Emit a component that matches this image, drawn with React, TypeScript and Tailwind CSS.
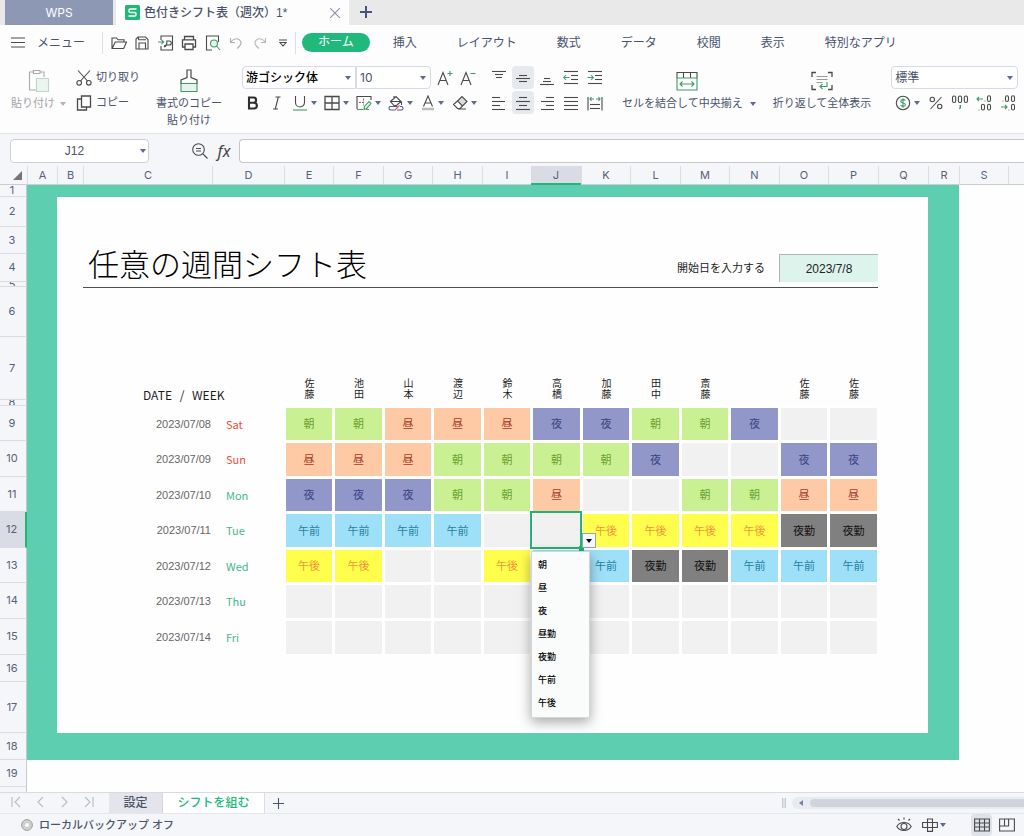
import React from "react";

type Shift = "朝" | "昼" | "夜" | "夜勤" | "午前" | "午後" | "";

const SHIFT_STYLES: Record<Shift, string> = {
  朝: "bg-[#c9f193] text-[#6c9f2f]",
  昼: "bg-[#fecaa5] text-[#a63c2c]",
  夜: "bg-[#9198c9] text-[#3a427f]",
  夜勤: "bg-[#808080] text-[#111111]",
  午前: "bg-[#9fe0f9] text-[#25809f]",
  午後: "bg-[#fffe4d] text-[#f2953a]",
  "": "bg-[#f1f1f1]",
};

const COLUMNS: { name: string; width: number | null }[] = [
  { name: "A", width: 30 },
  { name: "B", width: 26 },
  { name: "C", width: 129 },
  { name: "D", width: 72 },
  { name: "E", width: 49 },
  { name: "F", width: 50 },
  { name: "G", width: 49 },
  { name: "H", width: 50 },
  { name: "I", width: 49 },
  { name: "J", width: 50 },
  { name: "K", width: 49 },
  { name: "L", width: 50 },
  { name: "M", width: 49 },
  { name: "N", width: 50 },
  { name: "O", width: 49 },
  { name: "P", width: 50 },
  { name: "Q", width: 50 },
  { name: "R", width: 31 },
  { name: "S", width: 49 },
  { name: "", width: null },
];

const STAFF = ["佐藤", "池田", "山本", "渡辺", "鈴木", "高橋", "加藤", "田中", "斎藤", "", "佐藤", "佐藤"];

const DAYS: { row: number; height: number; date: string; day: string; weekend?: boolean; shifts: Shift[] }[] = [
  { row: 9, height: 35, date: "2023/07/08", day: "Sat", weekend: true, shifts: ["朝", "朝", "昼", "昼", "昼", "夜", "夜", "朝", "朝", "夜", "", ""] },
  { row: 10, height: 36, date: "2023/07/09", day: "Sun", weekend: true, shifts: ["昼", "昼", "昼", "朝", "朝", "朝", "朝", "夜", "", "", "夜", "夜"] },
  { row: 11, height: 35, date: "2023/07/10", day: "Mon", shifts: ["夜", "夜", "夜", "朝", "朝", "昼", "", "", "朝", "朝", "昼", "昼"] },
  { row: 12, height: 36, date: "2023/07/11", day: "Tue", shifts: ["午前", "午前", "午前", "午前", "", "", "午後", "午後", "午後", "午後", "夜勤", "夜勤"] },
  { row: 13, height: 35, date: "2023/07/12", day: "Wed", shifts: ["午後", "午後", "", "", "午後", "午前", "午前", "夜勤", "夜勤", "午前", "午前", "午前"] },
  { row: 14, height: 36, date: "2023/07/13", day: "Thu", shifts: ["", "", "", "", "", "", "", "", "", "", "", ""] },
  { row: 15, height: 36, date: "2023/07/14", day: "Fri", shifts: ["", "", "", "", "", "", "", "", "", "", "", ""] },
];

const OPTIONS = ["朝", "昼", "夜", "昼勤", "夜勤", "午前", "午後"];
const MENU_TABS = ["挿入", "レイアウト", "数式", "データ", "校閲", "表示", "特別なアプリ"];

type Box = { w: number; h: number; children: React.ReactNode; className?: string };

function Icon({ w, h, children, className = "" }: Box) {
  return (
    <svg width={w} height={h} viewBox={`0 0 ${w} ${h}`} fill="none" stroke="#4a4a4a" strokeWidth="1.1" className={`shrink-0 ${className}`} aria-hidden="true">
      {children}
    </svg>
  );
}

function Caret({ className = "" }: { className?: string }) {
  return (
    <svg width="6" height="4" viewBox="0 0 6 4" className={`shrink-0 ${className || "fill-[#5d6b8c]"}`} aria-hidden="true">
      <path d="M0 0h6L3 4z" />
    </svg>
  );
}

const GREEN = "#3f9b69";

function QuickAccess() {
  const items: [string, React.ReactNode][] = [
    ["開く", <Icon w={16} h={16}><path d="M1 13.5V3h4.5l1.5 1.8h6V7M1.2 13.5 4.2 7h11.3l-2.8 6.5z" /></Icon>],
    ["保存", <Icon w={14} h={14}><path d="M1 13V3L3 1h7.500L13 3.500V13zM3.500 3.800H11M4 13V7h6.500v6M3.500 1v2.800" /></Icon>],
    ["PDF出力", <Icon w={16} h={16}><path d="M3 5V1h11.5v14H3v-4M6.5 11.8c2-.5 2.4-2.8 2.4-5.8h2.4a1.7 1.7 0 0 1 0 4H8.2c-1 0-2 .6-1.7 1.8z" /><path d="M0 7h5.5M3.5 4.8 5.7 7l-2.2 2.2" stroke={GREEN} /></Icon>],
    ["印刷", <Icon w={16} h={16}><path d="M3.500 4.500v-3h9v3M4 12H1.500V4.800h13V12H12M4 9h8v5.500H4z" strokeWidth="1.3" /></Icon>],
    ["プレビュー", <Icon w={16} h={16}><path d="M7 15H1.500V1h12v6M1.500 15H5" /><circle cx="9" cy="8.500" r="3.500" fill="#e4f3ea" stroke={GREEN} /><path d="m11.500 11 3.500 4" stroke={GREEN} /></Icon>],
    ["元に戻す", <Icon w={14} h={14}><path d="M1.500 2v4.500H6M1.700 6.300C4 2.800 8 1.800 10.600 4c2.600 2.300 1.500 5.500-2.600 8.500" stroke="#b0b0b0" /></Icon>],
    ["やり直し", <Icon w={14} h={14}><path d="M12.500 2v4.500H8M12.300 6.300C10 2.800 6 1.800 3.400 4 .8 6.300 1.900 9.500 6 12.500" stroke="#b8b8b8" /></Icon>],
    ["カスタマイズ", <Icon w={8} h={8}><path d="M0 1h8M1 3.500h6L4 7z" /></Icon>],
  ];
  return (
    <div className="grid w-[188px] grid-cols-8 items-center">
      {items.map(([label, icon]) => (
        <button key={label} type="button" aria-label={label} className="flex h-6 items-center justify-center">
          {icon}
        </button>
      ))}
    </div>
  );
}

function ToolButton({ label, children, active = false, wide = false }: { label: string; children: React.ReactNode; active?: boolean; wide?: boolean }) {
  return (
    <button
      type="button"
      aria-label={label}
      className={`flex h-[23px] items-center justify-center gap-[3px] rounded ${wide ? "w-8" : "w-[22px]"} ${active ? "bg-[#e6e9ee]" : ""}`}
    >
      {children}
      {wide && <Caret />}
    </button>
  );
}

function SelectBox({ label, value, className }: { label: string; value: string; className: string }) {
  return (
    <div className={`relative h-[23px] border border-[#d5daea] bg-white ${className}`}>
      <select aria-label={label} defaultValue={value} className="block h-full w-full appearance-none bg-transparent pl-[3px] outline-none">
        <option>{value}</option>
      </select>
      <span className="pointer-events-none absolute inset-y-0 right-1 flex items-center"><Caret /></span>
    </div>
  );
}

function Lines({ rows, green }: { rows: [number, number, number][]; green?: React.ReactNode }) {
  return (
    <Icon w={16} h={16}>
      {rows.map(([x, y, len]) => <path key={`${x}-${y}`} d={`M${x} ${y + 0.5}h${len}`} />)}
      {green}
    </Icon>
  );
}

function Ribbon() {
  return (
    <div className="flex h-[74px] shrink-0 items-start overflow-hidden border-b border-[#e1e3e7] bg-[#fdfdfe] pl-[11px] pt-[6px] text-[11px] text-[#49536b] [&>*]:shrink-0">
      <button type="button" className="flex flex-col items-center text-[#a3a3a6]">
        <span className="flex h-[29px] items-center">
          <Icon w={22} h={24}>
            <path d="M5.500 3H1.500v18h7M12 3h4v5M5.500 1.500h6.500v3H5.500z" stroke="#a9a9a9" />
            <path d="M8.500 9.500h12v13h-12z" fill="#eaf5ef" stroke="#b9d9c8" />
          </Icon>
        </span>
        <span className="flex items-center gap-[5px] leading-[17px]">貼り付け<Caret className="fill-[#b5b5b8]" /></span>
      </button>

      <div className="ml-[10px] flex flex-col gap-[2px]">
        <button type="button" className="flex h-[23px] items-center gap-1">
          <Icon w={16} h={16}>
            <path d="M2 .5 11.500 11M14 .5 4.500 11" /><circle cx="3.200" cy="12.800" r="2.300" /><circle cx="12.800" cy="12.800" r="2.300" />
          </Icon>
          切り取り
        </button>
        <button type="button" className="flex h-[23px] items-center gap-1">
          <Icon w={16} h={16}><path d="M5.500 1h9v11h-9zM5.500 4H1.500v11h9v-3" strokeWidth="1.300" /></Icon>
          コピー
        </button>
      </div>

      <button type="button" className="ml-4 flex flex-col items-center">
        <span className="flex h-[29px] items-center">
          <Icon w={18} h={24}>
            <path d="M1 14.500h16v8H1z" fill="#e7f4ed" stroke={GREEN} />
            <path d="M1 14.500v-3.500l6-2.500V1h4v7.500l6 2.500v3.500" strokeWidth="1.200" />
          </Icon>
        </span>
        <span className="leading-[17px]">書式のコピー<br />貼り付け</span>
      </button>

      <div className="ml-5 flex flex-col gap-[2px]">
        <div className="flex">
          <SelectBox label="フォント" value="游ゴシック体" className="w-[114px] rounded-l text-xs font-medium text-black" />
          <SelectBox label="サイズ" value="10" className="w-[75px] rounded-r font-[Inter,sans-serif] text-xs" />
          <div className="ml-[3px] flex gap-px">
            <ToolButton label="フォントを拡大">
              <Icon w={16} h={16}><path d="m1 15 5-12.500L11 15M2.900 10.500h6.200" /><path d="M10.500 3.500h5M13 1v5" stroke={GREEN} /></Icon>
            </ToolButton>
            <ToolButton label="フォントを縮小">
              <Icon w={16} h={16}><path d="m1 15 5-12.500L11 15M2.900 10.500h6.200" /><path d="M10.500 3.500h5" stroke={GREEN} /></Icon>
            </ToolButton>
          </div>
        </div>
        <div className="flex">
          <div className="flex gap-[2px]">
            <ToolButton label="太字"><Icon w={12} h={14}><path d="M2 1.500h4.500a2.600 2.600 0 0 1 0 5.200H2zM2 6.700h5a2.900 2.900 0 0 1 0 5.800H2z" stroke="#2f2f2f" strokeWidth="2.100" /></Icon></ToolButton>
            <ToolButton label="斜体"><Icon w={12} h={14}><path d="M4.500 1h5M2 13h5M7.300 1l-3 12" /></Icon></ToolButton>
          </div>
          <ToolButton label="下線" wide><Icon w={16} h={16}><path d="M3.500 1v6.500a4.500 4.500 0 0 0 9 0V1" /><path d="M1 15h14" stroke={GREEN} /></Icon></ToolButton>
          <ToolButton label="罫線" wide><Icon w={16} h={16}><path d="M1 1.500h14v13H1zM8 1.500v13M1 8h14" strokeWidth="1.300" /></Icon></ToolButton>
          <ToolButton label="罫線を描く" wide>
            <Icon w={16} h={16}>
              <path d="M15 5V1.500H1V14" /><path d="M3 7.500h6M7.500 3.500v7" strokeDasharray="2 1" stroke="#777777" />
              <path d="M1 14.500h6M8 14.500l.5-3L13 6.500l2 2-4.500 5.200zM10 14.500h3" fill="#e4f3ea" stroke={GREEN} />
            </Icon>
          </ToolButton>
          <ToolButton label="塗りつぶし" wide>
            <Icon w={16} h={16}>
              <path d="M2.500 6.500 8 1.500l5 5-4.500 4H6zM6 3.500V1M13.500 6.500v3.500M2.500 6.500h10.500" />
              <path d="M6.500 15h-4c-2 0-2-3.500 0-3.500h7M12 11.500h1.500c2 0 2 3.500 0 3.500H9" stroke="#49598a" /><path d="m6.500 15.500 5-5" stroke="#d65a5a" />
            </Icon>
          </ToolButton>
          <ToolButton label="文字色" wide><Icon w={14} h={16}><path d="m2.500 11.500 4.500-10.500 4.500 10.500M4 8h6" /><path d="M1 14h12" stroke="#bcbcbc" strokeWidth="2.500" /></Icon></ToolButton>
          <ToolButton label="クリア" wide><Icon w={16} h={16}><path d="M5.500 6 10 1.500 15 6.500 10.500 11z" fill="#dcdcdc" /><path d="M5.500 6 1.500 9.500l4 4h2.500l2.500-2.500M6 14h8" /></Icon></ToolButton>
        </div>
      </div>

      <div className="ml-2 flex flex-col gap-[2px]">
        <div className="flex gap-[2px]">
          <ToolButton label="上揃え"><Lines rows={[[1, 1, 14], [4, 4, 8], [5, 7, 6]]} /></ToolButton>
          <ToolButton label="上下中央揃え" active><Lines rows={[[4, 5, 8], [1, 8, 14], [4, 11, 8]]} /></ToolButton>
          <ToolButton label="下揃え"><Lines rows={[[5, 8, 6], [4, 11, 8], [1, 14, 14]]} /></ToolButton>
          <ToolButton label="インデントを減らす"><Lines rows={[[1, 1, 14], [8, 5, 7], [8, 9, 7], [1, 13, 14]]} green={<path d="M6.500 7.500H1M3 5 .7 7.500 3 10" stroke={GREEN} />} /></ToolButton>
          <ToolButton label="インデントを増やす"><Lines rows={[[1, 1, 14], [8, 5, 7], [8, 9, 7], [1, 13, 14]]} green={<path d="M.5 7.500H6M4 5l2.300 2.500L4 10" stroke={GREEN} />} /></ToolButton>
        </div>
        <div className="flex gap-[2px]">
          <ToolButton label="左揃え"><Lines rows={[[1, 2, 8], [1, 6, 13], [1, 10, 8], [1, 14, 13]]} /></ToolButton>
          <ToolButton label="中央揃え" active><Lines rows={[[4, 2, 8], [1, 6, 14], [4, 10, 8], [1, 14, 14]]} /></ToolButton>
          <ToolButton label="右揃え"><Lines rows={[[7, 2, 8], [2, 6, 13], [7, 10, 8], [2, 14, 13]]} /></ToolButton>
          <ToolButton label="両端揃え"><Lines rows={[[1, 2, 14], [1, 6, 14], [1, 10, 14], [1, 14, 14]]} /></ToolButton>
          <ToolButton label="均等割り付け"><Lines rows={[[3, 9, 10], [3, 13, 10]]} green={<><path d="M1 2v13.500M15 2v13.500" /><path d="M3 4h4M9 4h4M4.500 2.200 3 4l1.500 1.800M11.500 2.200 13 4l-1.500 1.800" stroke={GREEN} /></>} /></ToolButton>
        </div>
      </div>

      <button type="button" className="ml-4 flex flex-col items-center">
        <span className="flex h-[29px] items-center pr-1">
          <Icon w={22} h={20}>
            <path d="M1 7V1.500h20V7M7.500 1.500V7M14.500 1.500V7" /><path d="M1 7h20v12H1zM4 13h14M6.500 10.500 4 13l2.500 2.500M15.500 10.500 18 13l-2.500 2.500" stroke={GREEN} />
          </Icon>
        </span>
        <span className="flex items-center gap-[7px] leading-[17px]">セルを結合して中央揃え<Caret /></span>
      </button>

      <button type="button" className="ml-[17px] flex flex-col items-center">
        <span className="flex h-[29px] items-center">
          <Icon w={22} h={20}>
            <path d="M5 1.500H1V6M17 1.500h4V6M5 18.500H1V14M17 18.500h4V14" strokeWidth="1.300" />
            <path d="M5.500 5.500h11M5.500 8.500h11M5.500 11.500h6" stroke="#999999" /><path d="M16 11v4.500H9M11.500 13 9 15.500l2.500 2.500" stroke={GREEN} />
          </Icon>
        </span>
        <span className="leading-[17px]">折り返して全体表示</span>
      </button>

      <div className="ml-5 flex flex-col gap-[2px]">
        <SelectBox label="表示形式" value="標準" className="w-[127px] rounded text-xs" />
        <div className="flex gap-[2px]">
          <ToolButton label="通貨" wide>
            <Icon w={16} h={16}><circle cx="8" cy="8" r="6.700" /><path d="M10.300 5.500C9.500 4.300 5.800 4.200 5.800 6.200c0 2.200 4.600 1.300 4.600 3.600 0 2-3.800 2-4.800.5M8 3.300v9.400" stroke={GREEN} /></Icon>
          </ToolButton>
          <ToolButton label="パーセント"><Icon w={14} h={14}><path d="M12.500 1 1.500 13" /><circle cx="3.300" cy="3.500" r="2.200" /><circle cx="10.700" cy="10.500" r="2.200" /></Icon></ToolButton>
          <ToolButton label="桁区切り">
            <Icon w={18} h={16}><rect x="1.500" y="1" width="3.200" height="6.500" rx="1.500" /><rect x="7.400" y="1" width="3.200" height="6.500" rx="1.500" /><rect x="13.300" y="1" width="3.200" height="6.500" rx="1.500" /><path d="M9.300 10v2.500L8.500 14" stroke={GREEN} strokeWidth="1.400" /></Icon>
          </ToolButton>
          <ToolButton label="小数点以下を増やす">
            <Icon w={16} h={16}><rect x="11.500" y=".8" width="3" height="5.700" rx="1.500" /><rect x="5.500" y="9.300" width="3" height="5.700" rx="1.500" /><rect x="11.500" y="9.300" width="3" height="5.700" rx="1.500" /><path d="M7 4H1M3 2 1 4l2 2M8.500 6h1M2.500 15h1" stroke={GREEN} /></Icon>
          </ToolButton>
          <ToolButton label="小数点以下を減らす">
            <Icon w={16} h={16}><rect x="5.500" y=".8" width="3" height="5.700" rx="1.500" /><rect x="11.500" y=".8" width="3" height="5.700" rx="1.500" /><rect x="11.500" y="9.300" width="3" height="5.700" rx="1.500" /><path d="M1 12h6M5 10l2 2-2 2M2.500 6h1M8.500 15h1" stroke={GREEN} /></Icon>
          </ToolButton>
        </div>
      </div>
    </div>
  );
}

function RowHead({ n, height, active = false }: { n: number; height: number; active?: boolean }) {
  return (
    <th scope="row" className="p-0 align-top font-normal">
      <div
        style={{ height }}
        className={`flex items-center overflow-hidden border-b pr-[2px] font-[Inter,sans-serif] text-[11px] leading-[11px] text-[#56617a] ${
          active ? "border-b-[#d9dce5] border-r-2 border-r-[#21b877] bg-[#d9dce5]" : "border-b-[#d9dbe0] border-r border-r-[#c6c9cf] bg-[#f5f6f9]"
        }`}
      >
        <span className="w-full text-center">{n}</span>
      </div>
    </th>
  );
}

const FRAME = "bg-[#5dcfb0] p-0";

function SheetRow({ n, height, active, children }: { n: number; height: number; active?: boolean; children?: React.ReactNode }) {
  return (
    <tr>
      <RowHead n={n} height={height} active={active} />
      <td className={FRAME} />
      {children ?? <td colSpan={16} className="p-0" />}
      <td className={FRAME} />
      <td className="p-0" />
      <td className="p-0" />
    </tr>
  );
}

function ActiveCell() {
  return (
    <td className="relative border-b border-l-2 border-r border-t-2 border-white bg-[#f1f1f1] p-0">
      <div className="pointer-events-none absolute -bottom-[2px] -left-[3px] -right-[2px] -top-[3px] z-10 border-2 border-[#21b573]">
        <span className="absolute -bottom-1 -right-1 h-[5px] w-[5px] bg-[#21b573]" />
      </div>
      <button type="button" aria-label="リストを開く" aria-haspopup="listbox" aria-expanded="true" className="absolute -bottom-px left-[49px] z-20 flex h-[15px] w-[14px] items-center justify-center border border-[#9aa0b8] bg-[#f6f7f8]">
        <Caret className="fill-black" />
      </button>
      <ul role="listbox" aria-label="シフト" className="absolute -left-[2px] top-[37px] z-20 w-[59px] border border-[#d2d6d6] bg-[#fafcfb] py-[2px] text-left text-[9px] font-medium text-black shadow-[0_4px_12px_rgba(0,0,0,0.35)]">
        {OPTIONS.map((option) => (
          <li key={option} role="option" aria-selected="false" className="flex h-[23px] items-center pl-[6px]">{option}</li>
        ))}
      </ul>
    </td>
  );
}

function Sheet() {
  return (
    <main className="min-h-0 flex-1 overflow-hidden bg-[#fefefe]">
      <table className="w-full table-fixed border-separate border-spacing-0">
        <colgroup>
          <col style={{ width: 27 }} />
          {COLUMNS.map((c, i) => <col key={i} style={c.width === null ? undefined : { width: c.width }} />)}
        </colgroup>
        <thead>
          <tr className="h-[19px] bg-[#f5f6f9] font-[Inter,sans-serif] text-[11px] leading-[16px] text-[#56617a]">
            <td className="border-b border-[#c9ccd2] p-0">
              <svg width="9" height="9" viewBox="0 0 9 9" className="ml-[13px]" aria-hidden="true"><path d="M9 0v9H0z" fill="#757575" /></svg>
            </td>
            {COLUMNS.map((c, i) => (
              <th
                key={i}
                scope="col"
                className={`p-0 font-normal ${c.name === "J" ? "border-b-2 border-[#21b877] bg-[#d9dce5]" : "border-b border-l border-b-[#c9ccd2] border-l-[#dcdee2]"}`}
              >
                {c.name}
              </th>
            ))}
          </tr>
        </thead>
        <tbody>
          <tr>
            <RowHead n={1} height={12} />
            <td colSpan={18} className={FRAME} />
            <td className="p-0" />
            <td className="p-0" />
          </tr>
          <SheetRow n={2} height={30} />
          <SheetRow n={3} height={27}>
            <td className="p-0" />
            <td colSpan={9} rowSpan={2} className="p-0 pl-[5px] align-bottom">
              <h1 className="font-['Noto_Sans_CJK_JP',sans-serif] text-[31px] font-light leading-[38px] text-black">任意の週間シフト表</h1>
            </td>
            <td colSpan={6} className="p-0" />
          </SheetRow>
          <SheetRow n={4} height={28}>
            <td className="p-0" />
            <td colSpan={3} className="p-0 pr-[14px] text-right align-middle text-[11px] leading-4 text-[#222222]">
              <label htmlFor="start">開始日を入力する</label>
            </td>
            <td colSpan={2} className="border-l border-t border-[#adb5b2] bg-[#ddf4ed] p-0 align-middle">
              <input id="start" defaultValue="2023/7/8" className="block h-[20px] w-full bg-transparent text-center text-xs text-[#222222] outline-none" />
            </td>
            <td className="p-0" />
          </SheetRow>
          <SheetRow n={5} height={5} />
          <SheetRow n={6} height={50}>
            <td className="p-0" />
            <td colSpan={14} className="border-t border-[#4f4f4f] p-0" />
            <td className="p-0" />
          </SheetRow>
          <SheetRow n={7} height={63}>
            <td className="p-0" />
            <td colSpan={2} className="whitespace-nowrap p-0 pl-[60px] align-bottom font-['Noto_Sans_CJK_JP',sans-serif] text-[12px] leading-[11px] text-[#1c1c1c]">
              DATE <span className="mx-[5px]">/</span> WEEK
            </td>
            {STAFF.map((name, i) => (
              <td key={i} className="p-0 pl-[2px] align-bottom text-[10px] leading-[11px] text-[#1c1c1c]">
                <div className="mx-auto w-[10px] break-all">{name}</div>
              </td>
            ))}
            <td className="p-0" />
          </SheetRow>
          <SheetRow n={8} height={6} />
          {DAYS.map((d) => (
            <SheetRow key={d.row} n={d.row} height={d.height} active={d.row === 12}>
              <td className="p-0" />
              <td className="p-0 pr-px text-right align-middle text-[11px] leading-4 text-[#666666]">{d.date}</td>
              <td className={`p-0 pl-[14px] align-middle font-['Noto_Sans_CJK_JP',sans-serif] text-[11px] leading-4 ${d.weekend ? "text-[#ee4b35]" : "text-[#46b58e]"}`}>{d.day}</td>
              {d.shifts.map((s, i) =>
                d.row === 12 && i === 5 ? (
                  <ActiveCell key={i} />
                ) : (
                  <td key={i} className={`border-b border-l-2 border-r border-t-2 border-white p-0 text-center align-middle text-[11px] leading-4 ${SHIFT_STYLES[s]}`}>{s}</td>
                ),
              )}
              <td className="p-0" />
            </SheetRow>
          ))}
          <SheetRow n={16} height={27} />
          <SheetRow n={17} height={51} />
          <tr>
            <RowHead n={18} height={27} />
            <td colSpan={18} className={FRAME} />
            <td className="p-0" />
            <td className="p-0" />
          </tr>
          {[19, 20].map((n) => (
            <tr key={n}>
              <RowHead n={n} height={27} />
              <td colSpan={20} className="p-0" />
            </tr>
          ))}
        </tbody>
      </table>
    </main>
  );
}

export default function App() {
  const sheetNav: [string, string][] = [
    ["最初のシート", "M1 1v10M9 1 4 6l5 5"],
    ["前のシート", "M8 1 3 6l5 5"],
    ["次のシート", "M3 1l5 5-5 5"],
    ["最後のシート", "M2 1l5 5-5 5M10 1v10"],
  ];
  return (
    <div className="flex h-screen flex-col overflow-hidden bg-white font-['Liberation_Sans','Noto_Sans_CJK_JP',sans-serif] text-[#49536b]">
      <header className="flex h-[25px] shrink-0 bg-[#e9e9ea] pl-[5px]">
        <button type="button" className="w-[108px] bg-[#8d98b4] font-[Inter,sans-serif] text-xs text-white">WPS</button>
        <div className="ml-[3px] flex w-[233px] items-center bg-[#fdfdfe] pl-[9px] pr-[9px]">
          <svg width="15" height="15" viewBox="0 0 15 15" className="shrink-0" aria-hidden="true">
            <rect width="15" height="15" rx="1.500" fill="#1fb877" />
            <path d="M11.500 4H5.200a1.200 1.200 0 0 0-1.200 1.200v1.100c0 .7.500 1.200 1.200 1.200h4.600c.7 0 1.200.5 1.200 1.200v1.100c0 .7-.5 1.200-1.200 1.200H3.500" fill="none" stroke="white" strokeWidth="1.400" />
          </svg>
          <span className="ml-1 whitespace-nowrap text-xs font-medium">色付きシフト表（週次）1*</span>
          <button type="button" aria-label="閉じる" className="ml-auto">
            <Icon w={10} h={10}><path d="m0 0 10 10M10 0 0 10" stroke="#8792ad" /></Icon>
          </button>
        </div>
        <button type="button" aria-label="新しいタブ" className="flex w-[34px] items-center justify-center pb-[2px]">
          <Icon w={12} h={12}><path d="M6 0v12M0 6h12" stroke="#44547a" strokeWidth="2" /></Icon>
        </button>
      </header>

      <div className="flex h-[35px] shrink-0 items-center overflow-hidden bg-[#fdfdfe] pl-[11px] text-xs [&>*]:shrink-0">
        <button type="button" className="flex items-center gap-3">
          <Icon w={14} h={11}><path d="M0 1h14M0 5.500h14M0 10h14" /></Icon>
          メニュー
        </button>
        <span className="ml-[17px] mr-1 h-[22px] w-px bg-[#dcdee2]" />
        <QuickAccess />
        <span className="h-[22px] w-px bg-[#dcdee2]" />
        <nav className="ml-[6px] flex items-center">
          <button type="button" className="mr-[3px] h-[19px] rounded-full bg-[#21b87b] px-4 leading-[19px] text-white">ホーム</button>
          {MENU_TABS.map((tab) => (
            <button key={tab} type="button" className="h-6 whitespace-nowrap px-5">{tab}</button>
          ))}
        </nav>
      </div>

      <Ribbon />

      <div className="flex h-[32px] shrink-0 items-center bg-[#f5f6f9] pl-[10px] pt-[4px] pb-[2px]">
        <div className="relative h-6 w-[139px] rounded border border-[#cfcfd2] bg-white">
          <input aria-label="セル参照" defaultValue="J12" className="block h-full w-full bg-transparent pr-[10px] text-center text-xs text-[#49536b] outline-none" />
          <span className="pointer-events-none absolute inset-y-0 right-[2px] flex items-center"><Caret /></span>
        </div>
        <button type="button" aria-label="検索" className="ml-[43px]">
          <Icon w={16} h={16}><circle cx="6.500" cy="6.500" r="5.800" /><path d="m11 11 4.500 4.500M4 5.500h5M4 8h5" /></Icon>
        </button>
        <button type="button" aria-label="関数を挿入" className="ml-[8px] w-[16px] font-['Noto_Sans',sans-serif] text-[16px] italic leading-[20px] text-[#444444]">fx</button>
        <input aria-label="数式" className="ml-[7px] h-6 min-w-0 flex-1 rounded-l border border-r-0 border-[#c6c6c9] bg-white px-2 text-xs outline-none" />
      </div>

      <Sheet />

      <div className="flex h-[21px] shrink-0 items-stretch border-t border-[#d9dbdf] bg-[#f5f6f9] text-xs">
        <div className="flex w-[109px] items-center pl-[4px] pb-[3px]">
          {sheetNav.map(([label, d]) => (
            <button key={label} type="button" aria-label={label} className="flex w-6 justify-center">
              <Icon w={11} h={12}><path d={d} stroke="#b7bbc5" /></Icon>
            </button>
          ))}
        </div>
        <button type="button" className="w-[54px] border-r border-[#d3d6e0] bg-[#e4e5ec] font-medium">設定</button>
        <button type="button" className="w-[101px] bg-white font-medium text-[#21b877]">シフトを組む</button>
        <button type="button" aria-label="シートを追加" className="flex w-[28px] items-center justify-center border-l border-[#d9dcee]">
          <Icon w={11} h={11}><path d="M5.500 0v11M0 5.500h11" strokeWidth="1.100" stroke="#49536b" /></Icon>
        </button>
        <div className="ml-auto flex w-[242px] items-center">
          <span className="h-[10px] w-[4px] border-x border-[#c6cad6] bg-[#dfe2ea]" />
          <div className="ml-[6px] flex h-[12px] flex-1 items-center rounded-l-full bg-[#e8ebf1] pl-[7px]">
            <svg width="4" height="6" viewBox="0 0 4 6" aria-hidden="true"><path d="M4 0v6L0 3z" fill="#7885a3" /></svg>
            <span className="ml-[7px] h-2 flex-1 rounded-l-full bg-[#d1d4db]" />
          </div>
        </div>
      </div>

      <footer className="flex h-[23px] shrink-0 items-center border-t border-[#e6e7ea] bg-[#f5f6f9] pl-[21px] text-[11px]">
        <svg width="12" height="12" viewBox="0 0 12 12" aria-hidden="true">
          <circle cx="6" cy="6" r="5.400" fill="#d0d0d0" stroke="#9d9d9d" /><circle cx="6" cy="6" r="2.300" fill="#fdfdfd" stroke="#bdbdbd" strokeWidth=".5" />
        </svg>
        <span className="ml-[6px] font-medium">ローカルバックアップ オフ</span>
        <div className="ml-auto flex items-center pr-[9px]">
          <button type="button" aria-label="目の保護">
            <Icon w={16} h={16}><path d="M.8 9.500c3-5.300 11.400-5.300 14.400 0-3 5.300-11.400 5.300-14.400 0zM8 .5v2M2 2l1.500 1.500M14 2l-1.500 1.500" /><circle cx="8" cy="9.500" r="3" /></Icon>
          </button>
          <button type="button" aria-label="読み取りモード" className="ml-[10px] flex items-center gap-[2px]">
            <Icon w={16} h={14}><path d="M.6 4.500h14.800v5H.6zM5.500 1h5v12.400h-5z" /></Icon>
            <Caret />
          </button>
          <button type="button" aria-label="標準表示" className="ml-[25px] flex h-[22px] w-[21px] items-center justify-center rounded-sm bg-[#dfe2e8]">
            <Icon w={16} h={14}><path d="M.6 1h14.800v12H.6zM.6 5h14.800M.6 9h14.800M5.500 1v12M10.500 1v12" /></Icon>
          </button>
          <button type="button" aria-label="改ページ" className="ml-[7px]">
            <Icon w={16} h={14}><path d="M.6 1h14.800v12H.6zM.6 8h9V1M5.500 1v7" /></Icon>
          </button>
        </div>
      </footer>
    </div>
  );
}
